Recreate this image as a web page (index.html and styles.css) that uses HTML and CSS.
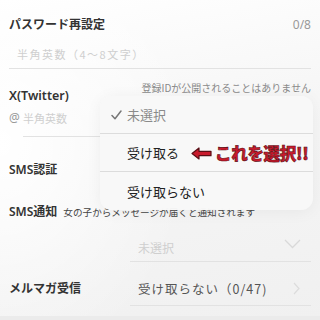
FILE: index.html
```html
<!DOCTYPE html>
<html lang="ja">
<head>
    <meta charset="UTF-8">
    <meta name="viewport" content="width=device-width, initial-scale=1.0">
    <title>プロフィール設定</title>
    <link rel="stylesheet" href="styles.css">
</head>
<body>
    <div class="page">
        <!-- Password -->
        <div class="section section-password">
            <div class="row-title">
                <span class="label">パスワード再設定</span>
                <span class="counter">0/8</span>
            </div>
            <div class="row-input">
                <span class="placeholder placeholder-wide">半角英数（4～8文字）</span>
            </div>
        </div>

        <!-- X (Twitter) -->
        <div class="section section-twitter">
            <div class="row-title row-title-note">
                <span class="label">X(Twitter)</span>
                <span class="note">登録IDが公開されることはありません</span>
            </div>
            <div class="row-at">
                <span class="at">@</span>
                <span class="at-input placeholder">半角英数</span>
            </div>
        </div>

        <!-- SMS -->
        <div class="row-sms-auth">
            <span class="label">SMS認証</span>
        </div>
        <div class="row-sms-notify">
            <span class="label">SMS通知</span>
            <span class="small-note">女の子からメッセージが届くと通知されます</span>
        </div>
        <div class="select-box">
            <span class="placeholder select-text">未選択</span>
            <svg class="chevron-down" width="17" height="10" viewBox="0 0 17 10">
                <polyline points="1,1 8.5,8.5 16,1" fill="none" stroke="#d9d9d9" stroke-width="1.3"/>
            </svg>
        </div>

        <!-- Mail magazine -->
        <div class="row-mail">
            <span class="label mail-label">メルマガ受信</span>
            <div class="mail-value">
                <span class="mail-text">受け取らない（0/47)</span>
                <svg class="chevron-right" width="7" height="13" viewBox="0 0 7 13">
                    <polyline points="1,1 6,6.5 1,12" fill="none" stroke="#dcdcdc" stroke-width="1.2"/>
                </svg>
            </div>
        </div>
        <div class="bottom-band"></div>

        <!-- Select menu -->
        <div class="menu">
            <div class="menu-item menu-item-checked">
                <svg class="check" width="11" height="10" viewBox="0 0 11 10">
                    <path d="M1 5.5 L4 8.8 L10 1" fill="none" stroke="#777" stroke-width="1.5" stroke-linecap="round" stroke-linejoin="round"/>
                </svg>
                <span>未選択</span>
            </div>
            <div class="menu-item">
                <span class="check-space"></span>
                <span>受け取る</span>
            </div>
            <div class="menu-item">
                <span class="check-space"></span>
                <span>受け取らない</span>
            </div>
        </div>

        <!-- Annotation -->
        <div class="annotation">
            <svg class="arrow" width="21" height="13" viewBox="0 0 21 13">
                <path d="M1 6.5 L8 1 L8 4.3 L20 4.3 L20 8.7 L8 8.7 L8 12 Z" fill="#c81a2c" stroke="#5a0d14" stroke-width="1.2" stroke-linejoin="round"/>
            </svg>
            <span class="annotation-text">これを選択!!</span>
        </div>
    </div>
</body>
</html>
```

FILE: styles.css
```css
/* Base */
body {
    margin: 0;
    font-family: "Noto Sans", "Noto Sans CJK JP", sans-serif;
    color: #333;
}

.page {
    position: relative;
    width: 320px;
    height: 320px;
    overflow: hidden;
    background:
        radial-gradient(ellipse 60% 70% at 0% 45%, #ffffff 0%, rgba(255, 255, 255, 0) 100%),
        linear-gradient(170deg, #ffffff 0%, #f6f6f6 40%, #f0f0f0 100%);
}

.label {
    font-size: 12px;
    font-weight: 600;
    color: #333;
    line-height: 18px;
}

.placeholder {
    font-family: "Noto Sans CJK JP", sans-serif;
    font-size: 11px;
    color: #cfcfcf;
    line-height: 18px;
}

.placeholder-wide {
    letter-spacing: 1.5px;
}

/* Password */
.section {
    margin: 0 9px;
}

.section-password {
    padding-top: 16px;
    padding-bottom: 8px;
    border-bottom: 1px solid #e2e2e2;
}

.row-title {
    display: flex;
    justify-content: space-between;
    align-items: center;
    height: 18px;
}

.counter {
    font-size: 12px;
    color: #999;
    line-height: 18px;
}

.row-input {
    height: 18px;
    margin-top: 8px;
    padding-left: 8px;
}

/* Twitter */
.row-title-note {
    height: 24px;
    margin-top: 12px;
    align-items: stretch;
}

.row-title-note .label {
    align-self: flex-end;
    font-size: 12.5px;
}

.note {
    align-self: flex-start;
    font-family: "Noto Sans CJK JP", sans-serif;
    font-size: 10px;
    line-height: 14px;
    color: #8a8a8a;
}

.row-at {
    display: flex;
    align-items: flex-start;
    margin-top: 4px;
}

.at {
    width: 14px;
    font-size: 12px;
    line-height: 18px;
    color: #999;
}

.at-input {
    flex: 1;
    height: 18px;
    padding-bottom: 9px;
    border-bottom: 1px solid #e2e2e2;
}

/* SMS */
.row-sms-auth {
    margin: 20px 9px 0;
    height: 18px;
}

.row-sms-notify {
    display: flex;
    align-items: baseline;
    margin: 28px 9px 0;
    height: 18px;
}

.small-note {
    margin-left: 6px;
    font-family: "Noto Sans CJK JP", sans-serif;
    font-size: 9.6px;
    color: #444;
    white-space: nowrap;
}

.select-box {
    display: flex;
    justify-content: space-between;
    align-items: center;
    margin: 14px 9px 0 130px;
    padding: 0 10px 0 8px;
    height: 26px;
    border-bottom: 1px solid #e2e2e2;
}

.select-text {
    font-size: 12px;
}

.chevron-down {
    margin-top: -9px;
}

/* Mail */
.row-mail {
    display: flex;
    align-items: center;
    margin: 9px 9px 0;
    height: 35px;
}

.mail-label {
    width: 121px;
}

.mail-value {
    flex: 1;
    align-self: stretch;
    display: flex;
    justify-content: space-between;
    align-items: center;
    padding: 0 11px 0 8px;
    border-bottom: 1px solid #e2e2e2;
    font-family: "Noto Sans CJK JP", sans-serif;
    font-size: 12.5px;
    color: #555;
}

.mail-text {
    letter-spacing: 1px;
}

.bottom-band {
    margin-top: 10px;
    height: 10px;
    background: #ebebeb;
}

/* Menu overlay */
.menu {
    position: absolute;
    left: 100px;
    top: 96px;
    width: 213px;
    border-radius: 12px;
    background: rgba(248, 248, 248, 0.97);
    box-shadow: 0 2px 16px rgba(0, 0, 0, 0.05);
    overflow: hidden;
}

.menu-item {
    display: flex;
    align-items: center;
    height: 37px;
    padding-left: 11px;
    font-size: 13px;
    color: #222;
    border-bottom: 1px solid #dcdcdc;
}

.menu-item:last-child {
    height: 38px;
    border-bottom: none;
}

.menu-item-checked {
    color: #8a8a8a;
}

.check {
    width: 11px;
    margin-right: 5px;
}

.check-space {
    width: 16px;
}

/* Annotation */
.annotation {
    position: absolute;
    left: 191px;
    top: 143px;
    display: flex;
    align-items: center;
    height: 20px;
}

.arrow {
    margin-right: 3px;
}

.annotation-text {
    font-family: "Noto Sans CJK JP", sans-serif;
    font-size: 16.5px;
    font-weight: 900;
    line-height: 20px;
    color: #c81a2c;
    -webkit-text-stroke: 0.6px #5a0d14;
    letter-spacing: -0.3px;
}
```
